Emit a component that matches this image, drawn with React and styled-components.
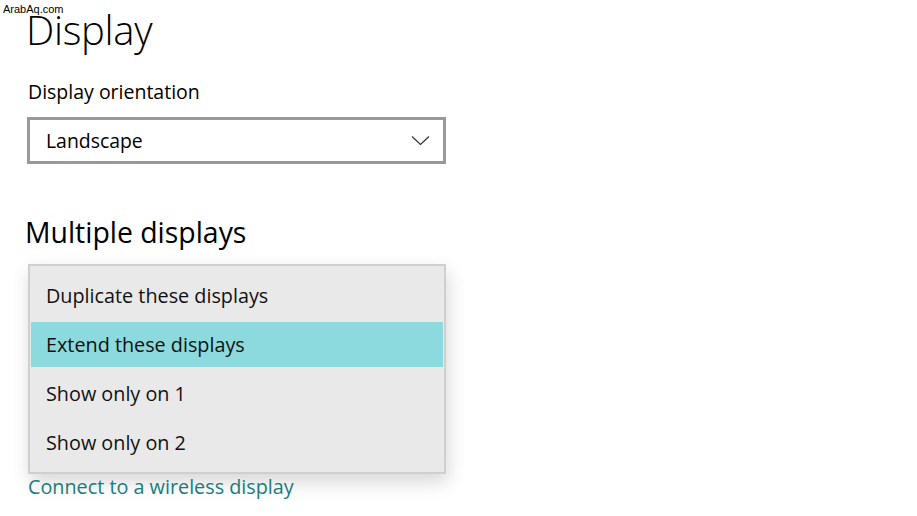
import React from "react";
import styled, { createGlobalStyle } from "styled-components";

const Global = createGlobalStyle`
  html, body { margin: 0; padding: 0; background: #ffffff; }
  body { font-family: "Open Sans", "Noto Sans", sans-serif; color: #000; }
`;

const Page = styled.div`
  position: relative;
  width: 917px;
  height: 516px;
  overflow: hidden;
  background: #fff;
  box-sizing: border-box;
  padding: 6px 0 0 26px;
  display: flex;
  flex-direction: column;
  align-items: flex-start;
`;

const Watermark = styled.div`
  position: absolute;
  left: 3px;
  top: 3px;
  font-family: "Liberation Sans", Arial, sans-serif;
  font-size: 11px;
  line-height: 13px;
  color: #000;
  z-index: 5;
`;

const Title = styled.h1`
  margin: 0;
  font-family: "Open Sans", "Noto Sans", sans-serif;
  font-weight: 300;
  font-size: 40px;
  line-height: 48px;
  letter-spacing: -0.3px;
`;

const Label = styled.div`
  margin: 26px 0 0 2px;
  font-size: 19.5px;
  line-height: 24px;
`;

const Combo = styled.div`
  margin: 13px 0 0 1px;
  width: 419px;
  height: 47px;
  box-sizing: border-box;
  border: 3px solid #999999;
  background: #fff;
  display: flex;
  align-items: center;
  justify-content: space-between;
  padding: 0 13px 0 16px;
  font-size: 19.4px;
`;

const Section = styled.h2`
  margin: 51px 0 0 -1px;
  font-weight: 400;
  font-size: 28.4px;
  line-height: 34px;
`;

const Menu = styled.div`
  margin: 15px 0 0 2px;
  width: 418px;
  box-sizing: border-box;
  border: 2px solid #cfcfcf;
  background: #e9e9e9;
  padding: 5px 1px 5px 1px;
  display: flex;
  flex-direction: column;
  box-shadow: 2px 8px 18px rgba(0, 0, 0, 0.16);
  position: relative;
  z-index: 2;
`;

const Item = styled.div`
  height: 49px;
  padding: 2px 0;
  box-sizing: border-box;
  display: flex;
`;

const ItemInner = styled.div`
  flex: 1;
  display: flex;
  align-items: center;
  padding-left: 15px;
  font-size: 19.8px;
  color: #111;
  background: ${(p) => (p.$active ? "#8cdadd" : "transparent")};
`;

const Link = styled.a`
  margin: 1px 0 0 2px;
  font-size: 19.8px;
  line-height: 24px;
  color: #1a7b7c;
  text-decoration: none;
  cursor: pointer;
  position: relative;
  z-index: 3;
`;

const Chevron = () => (
  <svg width="19" height="11" viewBox="0 0 19 11" fill="none">
    <path d="M1 1.5 L9.5 9.5 L18 1.5" stroke="#333" strokeWidth="1.2" />
  </svg>
);

const options = [
  "Duplicate these displays",
  "Extend these displays",
  "Show only on 1",
  "Show only on 2",
];

export default function App() {
  return (
    <Page>
      <Global />
      <Watermark>ArabAq.com</Watermark>
      <Title>Display</Title>
      <Label>Display orientation</Label>
      <Combo>
        <span>Landscape</span>
        <Chevron />
      </Combo>
      <Section>Multiple displays</Section>
      <Menu>
        {options.map((o, i) => (
          <Item key={o}>
            <ItemInner $active={i === 1}>{o}</ItemInner>
          </Item>
        ))}
      </Menu>
      <Link>Connect to a wireless display</Link>
    </Page>
  );
}
